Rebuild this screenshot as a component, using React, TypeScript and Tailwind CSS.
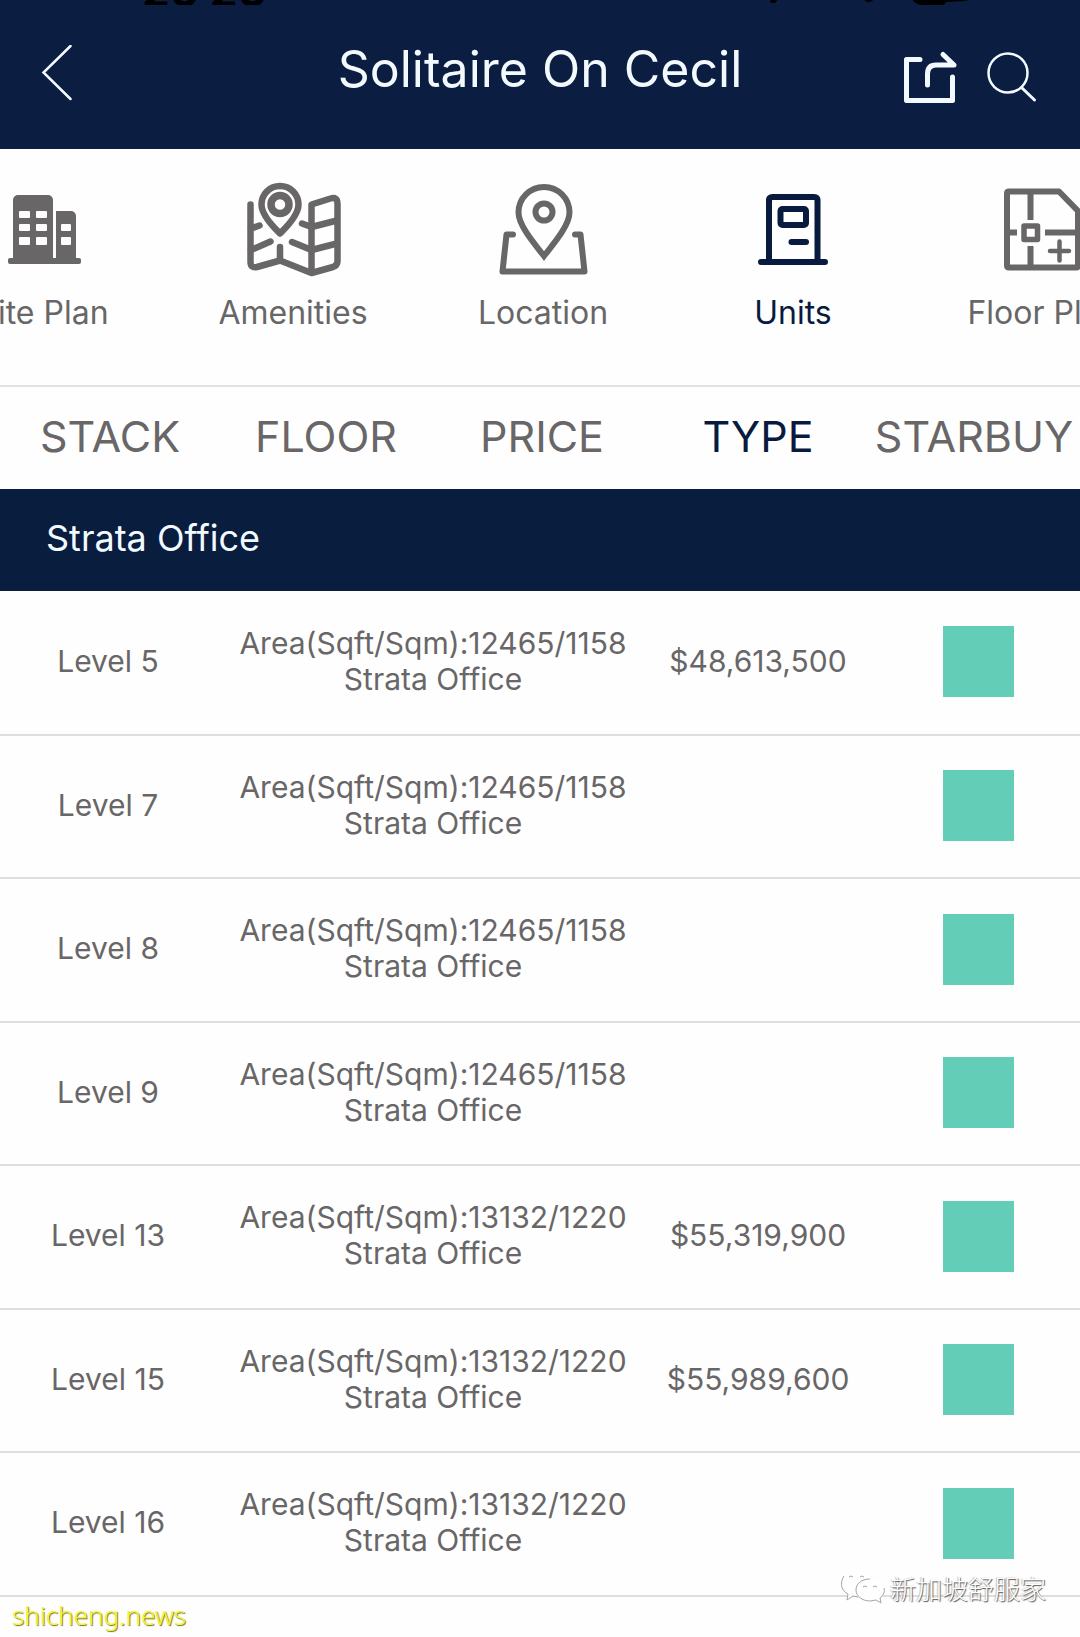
import type { ReactNode } from "react";

const GREY = "text-[#686667]";
const NAVY = "text-[#081b3f]";

type NavItem = { label: string; active?: boolean; icon: ReactNode };

const SitePlanIcon = () => (
  <svg viewBox="0 0 100 100" className="size-[100px]" fill="currentColor" aria-hidden="true">
    <path
      fillRule="evenodd"
      d="M20 20a5 5 0 0 1 5-5h30a5 5 0 0 1 5 5v58h3V31h15a5 5 0 0 1 5 5v42h3a2 2 0 0 1 2 2v2a2 2 0 0 1-2 2H17a2 2 0 0 1-2-2v-2a2 2 0 0 1 2-2h3z
      M27 31h9a1 1 0 0 1 1 1v5a1 1 0 0 1-1 1h-9a1 1 0 0 1-1-1v-5a1 1 0 0 1 1-1z
      M44 31h9a1 1 0 0 1 1 1v5a1 1 0 0 1-1 1h-9a1 1 0 0 1-1-1v-5a1 1 0 0 1 1-1z
      M27 44h9a1 1 0 0 1 1 1v5a1 1 0 0 1-1 1h-9a1 1 0 0 1-1-1v-5a1 1 0 0 1 1-1z
      M44 44h9a1 1 0 0 1 1 1v5a1 1 0 0 1-1 1h-9a1 1 0 0 1-1-1v-5a1 1 0 0 1 1-1z
      M27 57h9a1 1 0 0 1 1 1v6a1 1 0 0 1-1 1h-9a1 1 0 0 1-1-1v-6a1 1 0 0 1 1-1z
      M44 57h9a1 1 0 0 1 1 1v6a1 1 0 0 1-1 1h-9a1 1 0 0 1-1-1v-6a1 1 0 0 1 1-1z
      M69 44h8a1 1 0 0 1 1 1v5a1 1 0 0 1-1 1h-8a1 1 0 0 1-1-1v-5a1 1 0 0 1 1-1z
      M69 57h8a1 1 0 0 1 1 1v6a1 1 0 0 1-1 1h-8a1 1 0 0 1-1-1v-6a1 1 0 0 1 1-1z"
    />
  </svg>
);

const AmenitiesIcon = () => (
  <svg viewBox="0 0 100 100" className="size-[100px]" fill="none" stroke="currentColor" strokeWidth="6.5" strokeLinecap="round" strokeLinejoin="round" aria-hidden="true">
    <path d="M7.5 24.500V82q0 6.500 6.500 5L37 80.500 68.500 93 90 87q4.500-1.500 4.500-6V24q0-7.500-7-5.500L68.500 24.500V93" />
    <path d="M68.500 47 94 40.500M68.500 70 94 63.500M59 43.500 68.500 47M49 62l19.500 8M8 48.500l8.500-3M8 70l19.500-8.500M37 67v13" />
    <path d="M37 53.500C32 48.500 18.500 36 18.500 24.500a18.500 18.500 0 0 1 37 0C55.500 36 42 48.500 37 53.500z" />
    <circle cx="37" cy="24.500" r="9" strokeWidth="7.500" />
  </svg>
);

const LocationIcon = () => (
  <svg viewBox="0 0 100 100" className="size-[100px]" fill="none" stroke="currentColor" strokeWidth="6" strokeLinecap="round" strokeLinejoin="round" aria-hidden="true">
    <path strokeLinejoin="miter" d="M51 76C43 65.500 25.500 46 25.500 32.500a25.500 25.500 0 0 1 51 0C76.500 46 59 65.500 51 76z" />
    <circle cx="51" cy="32" r="8.500" />
    <path d="M20 54.500H13.500L9.500 91.500H91.500L87.500 54.500H82" />
  </svg>
);

const UnitsIcon = () => (
  <svg viewBox="0 0 100 100" className="size-[100px]" fill="none" stroke="currentColor" strokeWidth="6" strokeLinecap="round" strokeLinejoin="round" aria-hidden="true">
    <path d="M26 82V20.500Q26 17 29.500 17H71Q74.500 17 74.500 20.500V82M18 82H82" />
    <rect x="37.500" y="29" width="25.500" height="16" rx="2" />
    <path d="M48.500 62H63" />
  </svg>
);

const FloorPlanIcon = () => (
  <svg viewBox="0 0 100 100" className="size-[100px]" fill="none" stroke="currentColor" strokeWidth="6" strokeLinejoin="round" aria-hidden="true">
    <path d="M16 11.500H66L85 31V85.500Q85 87.500 83 87.500H16Q14 87.500 14 85.500V13.500Q14 11.500 16 11.500z" />
    <path d="M37.500 12V40M37.500 66V87M14 52.500H24M52 52.500H85" />
    <rect x="31" y="46" width="13.500" height="13.500" strokeWidth="5.500" />
    <path d="M66.500 61.500v19M57 71h19" strokeWidth="4.500" strokeLinecap="round" />
  </svg>
);

const navItems: NavItem[] = [
  { label: "Site Plan", icon: <SitePlanIcon /> },
  { label: "Amenities", icon: <AmenitiesIcon /> },
  { label: "Location", icon: <LocationIcon /> },
  { label: "Units", icon: <UnitsIcon />, active: true },
  { label: "Floor Plan", icon: <FloorPlanIcon /> },
];

const tabs = ["STACK", "FLOOR", "PRICE", "TYPE", "STARBUY"];

const units = [
  { level: "Level 5", area: "12465/1158", price: "$48,613,500" },
  { level: "Level 7", area: "12465/1158", price: "" },
  { level: "Level 8", area: "12465/1158", price: "" },
  { level: "Level 9", area: "12465/1158", price: "" },
  { level: "Level 13", area: "13132/1220", price: "$55,319,900" },
  { level: "Level 15", area: "13132/1220", price: "$55,989,600" },
  { level: "Level 16", area: "13132/1220", price: "" },
];

function StatusBar() {
  return (
    <div className="absolute inset-x-0 top-0 flex h-[5px] items-end justify-between overflow-hidden pr-[104px] pl-[142px] text-black">
      <span className="h-[14px] text-[44px] leading-[0px] font-bold">20 20</span>
      <svg viewBox="0 0 206 6" className="h-[6px] w-[206px]" fill="currentColor" aria-hidden="true">
        <path d="M0 0h8l-3 4H1zM93 0h12l-5 3h-3zM142 0h62l-10 2-18 1-2 3h-20q-9 0-12-6z" />
      </svg>
    </div>
  );
}

function Header() {
  return (
    <header className="relative grid h-[149px] grid-cols-[1fr_auto_1fr] items-center bg-[#0b1d40] text-[#f3faff]">
      <StatusBar />
      <button type="button" aria-label="Back" className="ml-10 w-9 justify-self-start">
        <svg viewBox="0 0 36 60" className="h-[60px] w-9" fill="none" stroke="currentColor" strokeWidth="2.500" strokeLinecap="round" aria-hidden="true">
          <path d="M30.500 1 3.500 27.500 30.500 54" />
        </svg>
      </button>
      <h1 className="pb-3 text-[50px] leading-[56px] whitespace-nowrap">Solitaire On Cecil</h1>
      <div className="flex items-center gap-7 justify-self-end pt-1 pr-[42px]">
        <button type="button" aria-label="Share">
          <svg viewBox="0 0 56 56" className="size-14" fill="none" stroke="currentColor" strokeWidth="5" strokeLinecap="round" strokeLinejoin="round" aria-hidden="true">
            <path d="M18 10.500H4.500V51.500H50.500V28" />
            <path d="M25.500 36V25Q25.500 16 34 16H52L41 5.500" />
          </svg>
        </button>
        <button type="button" aria-label="Search">
          <svg viewBox="0 0 52 56" className="h-14 w-[52px]" fill="none" stroke="currentColor" strokeWidth="2.500" strokeLinecap="round" aria-hidden="true">
            <circle cx="22" cy="24" r="19.500" />
            <path d="M35.500 38.500 48.500 51" strokeWidth="3" />
          </svg>
        </button>
      </div>
    </header>
  );
}

function WeChatMark() {
  return (
    <svg viewBox="0 0 46 34" className="h-[34px] w-[46px]" fill="white" stroke="#a5a3a8" strokeWidth="1" strokeLinejoin="round" aria-hidden="true">
      <path d="M4 5C-1 13 2 20 8 23L7 29l6-4 8 1C30 24 34 16 32 10 28 0 10-2 4 5z" stroke="none" />
      <path d="M4 5C-1 13 2 20 8 23L7 29l6-4 5 1" fill="none" />
      <path d="M30 8c-9 0-14 5-14 11s6 11 14 11l6-1 5 3-1-5c9-7 4-19-10-19z" stroke="none" />
      <path d="M30 8c-9 0-14 5-14 11s6 11 14 11l6-1 5 3-1-5c4-3 5-7 4-10" fill="none" />
      <path d="M9 6q2-2 4 0M20 6q2-2 4 0M23 16q2-2 4 0M33 16q2-2 4 0" fill="none" />
    </svg>
  );
}

export default function App() {
  return (
    <div className="relative min-h-screen overflow-hidden bg-[#fefefe] pb-10 font-['Inter',sans-serif]">
      <Header />

      <nav aria-label="Project sections" className="overflow-hidden border-b-2 border-[#e2e0e2] pt-[31px] pb-[54px] pl-[6px]">
        <ul className="flex justify-center">
          {navItems.map((item) => (
            <li key={item.label} className="w-[250px] shrink-0">
              <a href="#" aria-current={item.active ? "page" : undefined} className={`flex flex-col items-center gap-[15px] ${item.active ? NAVY : GREY}`}>
                {item.icon}
                <span className="text-[32px] leading-9 whitespace-nowrap">{item.label}</span>
              </a>
            </li>
          ))}
        </ul>
      </nav>

      <div role="tablist" aria-label="Group units by" className="grid h-[102px] grid-cols-5 pb-1">
        {tabs.map((tab) => (
          <button
            key={tab}
            type="button"
            role="tab"
            aria-selected={tab === "TYPE"}
            className={`pl-1 text-[43px] leading-[48px] whitespace-nowrap ${tab === "TYPE" ? NAVY : GREY}`}
          >
            {tab}
          </button>
        ))}
      </div>

      <h2 className="flex h-[102px] items-center bg-[#091d3f] pb-1 pl-[46px] text-[36px] leading-10 text-[#f3faff]">Strata Office</h2>

      <table className={`w-full table-fixed border-collapse text-center text-[30px] leading-9 ${GREY}`}>
        <colgroup>
          <col className="w-1/5" />
          <col className="w-2/5" />
          <col className="w-1/5" />
          <col className="w-1/5" />
        </colgroup>
        <tbody>
          {units.map((unit) => (
            <tr key={unit.level} className="h-36 border-b-2 border-[#dedede] even:h-[143px]">
              <th scope="row" className="p-0 pb-1 font-normal">{unit.level}</th>
              <td className="p-0 pb-1 pl-0.5 whitespace-nowrap">
                Area(Sqft/Sqm):{unit.area}
                <br />
                Strata Office
              </td>
              <td className="p-0 pb-1 pl-1">{unit.price}</td>
              <td className="p-0 pb-0.5 pl-3">
                <div className="mx-auto size-[71px] bg-[#63cdb8]" />
              </td>
            </tr>
          ))}
        </tbody>
      </table>

      <div className="absolute right-[34px] bottom-8 flex items-center gap-1">
        <WeChatMark />
        <span className="font-['Noto_Sans_CJK_SC',sans-serif] text-[26px] leading-8 font-light whitespace-nowrap text-white [text-shadow:1px_1px_1px_#555,-1px_0px_1px_#bbb]">新加坡舒服家</span>
      </div>
      <span className="absolute bottom-1 left-3 font-['Noto_Sans',sans-serif] text-[26px] leading-9 font-light text-[#f6f62a] [text-shadow:1px_1px_1px_#6d6d10]">shicheng.news</span>
    </div>
  );
}
